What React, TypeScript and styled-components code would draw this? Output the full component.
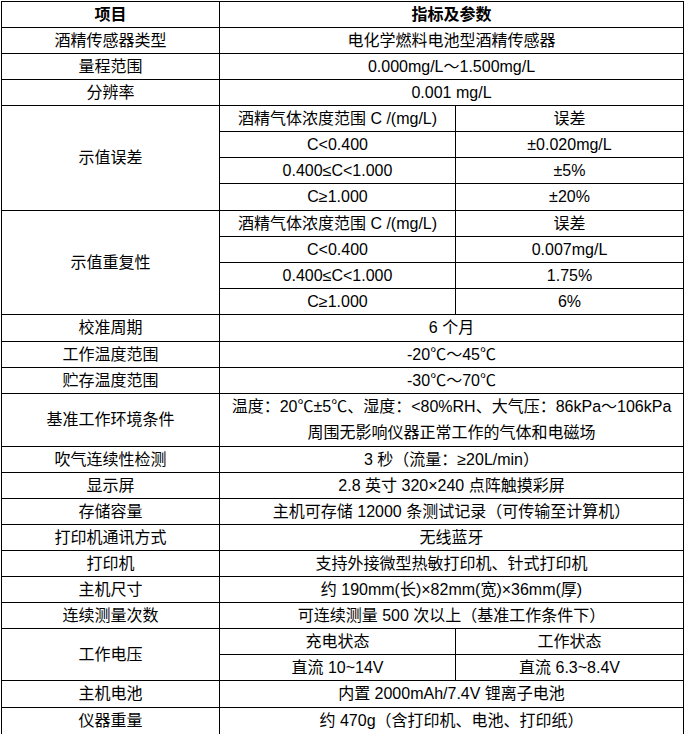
import styled, { createGlobalStyle } from "styled-components";

// Page reset: white page, no body margin, Arial-width Latin with a CJK fallback
const GlobalStyle = createGlobalStyle`
    html, body {
        margin: 0;
        padding: 0;
        background: #fff;
    }
    body {
        font-family: "Liberation Sans", "Noto Sans CJK SC", sans-serif;
        color: #000;
    }
`;

const Wrapper = styled.div`
    padding: 1px 0 0 1px;
`;

// The spec sheet: one black grid with collapsed 1px lines
const Sheet = styled.table`
    width: 682px;
    table-layout: fixed;
    border-collapse: collapse;
    font-size: 16px;
`;

const Col = styled.col<{ $w: number }>`
    width: ${(p) => p.$w}px;
`;

const Row = styled.tr<{ $h?: number }>`
    height: ${(p) => p.$h ?? 26}px;
`;

const Cell = styled.td<{ $bold?: boolean }>`
    border: 1px solid #000;
    padding: 0 4px;
    text-align: center;
    vertical-align: middle;
    line-height: 24px;
    white-space: nowrap;
    font-weight: ${(p) => (p.$bold ? 700 : 400)};
`;

// Two-line value cell (the reference conditions row)
const WrapCell = styled(Cell)`
    line-height: 26px;
    white-space: normal;
`;

type Sub = [string, string];

const errorRows: Sub[] = [
    ["酒精气体浓度范围 C /(mg/L)", "误差"],
    ["C<0.400", "±0.020mg/L"],
    ["0.400≤C<1.000", "±5%"],
    ["C≥1.000", "±20%"],
];

const repeatRows: Sub[] = [
    ["酒精气体浓度范围 C /(mg/L)", "误差"],
    ["C<0.400", "0.007mg/L"],
    ["0.400≤C<1.000", "1.75%"],
    ["C≥1.000", "6%"],
];

// A group of sub-rows with the item name spanning all of them
function SubGroup({ name, rows }: { name: string; rows: Sub[] }) {
    return (
        <>
            {rows.map((r, i) => (
                <Row key={i} $h={i === rows.length - 1 && name === "示值误差" ? 27 : 26}>
                    {i === 0 && <Cell rowSpan={rows.length}>{name}</Cell>}
                    <Cell>{r[0]}</Cell>
                    <Cell>{r[1]}</Cell>
                </Row>
            ))}
        </>
    );
}

function Line({ name, value, h }: { name: string; value: string; h?: number }) {
    return (
        <Row $h={h}>
            <Cell>{name}</Cell>
            <Cell colSpan={2}>{value}</Cell>
        </Row>
    );
}

export default function App() {
    return (
        <>
            <GlobalStyle />
            <Wrapper>
                <Sheet>
                    <colgroup>
                        <Col $w={218} />
                        <Col $w={236} />
                        <Col $w={228} />
                    </colgroup>
                    <tbody>
                        <Row>
                            <Cell $bold>项目</Cell>
                            <Cell $bold colSpan={2}>指标及参数</Cell>
                        </Row>
                        <Line name="酒精传感器类型" value="电化学燃料电池型酒精传感器" />
                        <Line name="量程范围" value="0.000mg/L～1.500mg/L" />
                        <Line name="分辨率" value="0.001 mg/L" />
                        <SubGroup name="示值误差" rows={errorRows} />
                        <SubGroup name="示值重复性" rows={repeatRows} />
                        <Line name="校准周期" value="6 个月" h={27} />
                        <Line name="工作温度范围" value="-20℃～45℃" />
                        <Line name="贮存温度范围" value="-30℃～70℃" />
                        <Row $h={52}>
                            <Cell>基准工作环境条件</Cell>
                            <WrapCell colSpan={2}>
                                温度：20℃±5℃、湿度：&lt;80%RH、大气压：86kPa～106kPa
                                <br />
                                周围无影响仪器正常工作的气体和电磁场
                            </WrapCell>
                        </Row>
                        <Line name="吹气连续性检测" value="3 秒（流量：≥20L/min）" />
                        <Line name="显示屏" value="2.8 英寸 320×240 点阵触摸彩屏" />
                        <Line name="存储容量" value="主机可存储 12000 条测试记录（可传输至计算机）" />
                        <Line name="打印机通讯方式" value="无线蓝牙" />
                        <Line name="打印机" value="支持外接微型热敏打印机、针式打印机" />
                        <Line name="主机尺寸" value="约 190mm(长)×82mm(宽)×36mm(厚)" />
                        <Line name="连续测量次数" value="可连续测量 500 次以上（基准工作条件下）" />
                        <Row>
                            <Cell rowSpan={2}>工作电压</Cell>
                            <Cell>充电状态</Cell>
                            <Cell>工作状态</Cell>
                        </Row>
                        <Row>
                            <Cell>直流 10~14V</Cell>
                            <Cell>直流 6.3~8.4V</Cell>
                        </Row>
                        <Line name="主机电池" value="内置 2000mAh/7.4V 锂离子电池" h={27} />
                        <Line name="仪器重量" value="约 470g（含打印机、电池、打印纸）" h={27} />
                    </tbody>
                </Sheet>
            </Wrapper>
        </>
    );
}
